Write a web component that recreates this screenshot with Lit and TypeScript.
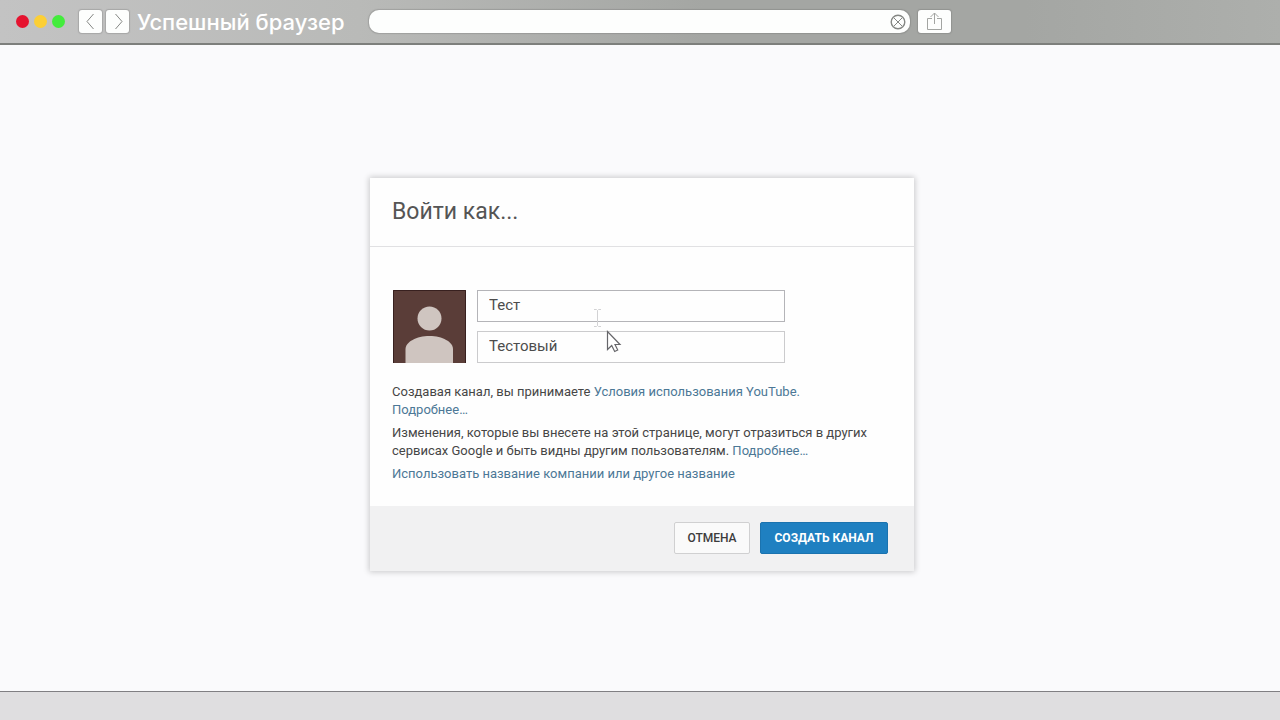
import { LitElement, html, css } from "lit";
import { customElement } from "lit/decorators.js";

@customElement("browser-bar")
class BrowserBar extends LitElement {
  static styles = css`
    :host {
      display: block;
    }
    .bar {
      box-sizing: border-box;
      height: 45px;
      display: flex;
      align-items: center;
      padding: 0 16px;
      background: linear-gradient(90deg, #c3c3c3 0%, #b9bab8 28%, #a4a6a3 55%, #a4a6a3 80%, #adafac 100%);
      border-bottom: 2px solid #7d7f7c;
    }
    .lights {
      display: flex;
      gap: 5px;
      margin-right: 14px;
    }
    .light {
      width: 13px;
      height: 13px;
      border-radius: 50%;
    }
    .red {
      background: #e5132f;
    }
    .yellow {
      background: #fccf35;
    }
    .green {
      background: #43ec3c;
    }
    button {
      display: grid;
      place-items: center;
      padding: 0;
      border: 0;
      background: #fdfefd;
      border-radius: 3px;
      height: 23px;
      box-shadow: 0 0 1px 1px rgba(90, 90, 90, 0.25);
    }
    .nav {
      display: flex;
      gap: 4px;
      margin-right: 8px;
    }
    .nav button {
      width: 23px;
    }
    .name {
      font: 500 22px/26px Inter, "Liberation Sans", sans-serif;
      color: #fff;
      width: 212px;
      white-space: nowrap;
      margin-right: 20px;
    }
    .address {
      box-sizing: border-box;
      width: 541px;
      height: 23px;
      display: flex;
      align-items: center;
      padding: 0 4px 0 12px;
      border-radius: 10px;
      background: #fdfefd;
      box-shadow: 0 0 1px 1px rgba(90, 90, 90, 0.25);
      margin-right: 8px;
    }
    .address input {
      flex: 1;
      min-width: 0;
      border: 0;
      outline: 0;
      background: none;
      font: 14px/20px Roboto, sans-serif;
    }
    .address button {
      width: 16px;
      height: 16px;
      background: none;
      box-shadow: none;
    }
    .share {
      width: 33px;
    }
    svg {
      display: block;
      fill: none;
      stroke: #858784;
    }
  `;

  render() {
    return html`
      <header class="bar">
        <div class="lights">
          <span class="light red"></span>
          <span class="light yellow"></span>
          <span class="light green"></span>
        </div>
        <nav class="nav">
          <button aria-label="Назад">
            <svg width="22" height="23" viewBox="0 0 22 23"><path d="M13.500 4 7 11.500l6.500 7.500" /></svg>
          </button>
          <button aria-label="Вперёд">
            <svg width="22" height="23" viewBox="0 0 22 23"><path d="m8.500 4 6.500 7.500-6.500 7.500" /></svg>
          </button>
        </nav>
        <span class="name">Успешный браузер</span>
        <div class="address">
          <input type="text" aria-label="Адрес" />
          <button aria-label="Очистить">
            <svg width="16" height="16" viewBox="0 0 16 16">
              <circle cx="8" cy="8" r="6.800" stroke-width="1.400" />
              <path d="m4 4 8 8M12 4l-8 8" />
            </svg>
          </button>
        </div>
        <button class="share" aria-label="Поделиться">
          <svg width="33" height="23" viewBox="0 0 33 23">
            <path d="M14 8.500H9.500v11h14v-11H19M16.500 14V3M12.500 7l4-4 4 4" stroke="#a3a5a2" />
          </svg>
        </button>
      </header>
    `;
  }
}

@customElement("channel-dialog")
class ChannelDialog extends LitElement {
  static styles = css`
    :host {
      display: block;
      width: 544px;
      max-width: 100%;
      font: 13px/18px Roboto, sans-serif;
      color: #464646;
    }
    .dialog {
      background: #fefefe;
      box-shadow: 0 0 6px 1px rgba(0, 0, 0, 0.2);
    }
    h1 {
      margin: 0;
      padding: 20px 22px;
      font-size: 23px;
      line-height: 28px;
      font-weight: 400;
      color: #555;
      border-bottom: 1px solid #e1e1e3;
    }
    .body {
      padding: 43px 22px 23px;
    }
    .account {
      display: flex;
      gap: 11px;
      margin: 0 1px 20px;
    }
    .avatar {
      display: block;
      width: 73px;
      height: 73px;
    }
    .fields {
      display: flex;
      flex-direction: column;
      justify-content: space-between;
      width: 308px;
    }
    .fields input {
      box-sizing: border-box;
      width: 100%;
      height: 32px;
      padding: 0 11px 2px;
      border: 1px solid #cbcbcd;
      border-radius: 0;
      background: #fefefe;
      font: 15px/18px Roboto, sans-serif;
      color: #4c4c4c;
      outline: 0;
    }
    .fields .first {
      border-color: #b4b4b8;
    }
    p {
      margin: 0 0 5px;
    }
    p:last-child {
      margin: 0;
    }
    a {
      color: #4c7896;
      text-decoration: none;
    }
    .actions {
      display: flex;
      justify-content: flex-end;
      gap: 10px;
      padding: 16px 26px 17px;
      background: #f1f1f2;
    }
    .actions button {
      box-sizing: border-box;
      height: 32px;
      padding: 0;
      border: 1px solid #d0d0d1;
      border-radius: 2px;
      background: #fafafa;
      font: 500 12px/18px Roboto, sans-serif;
      color: #3c3c3c;
      width: 76px;
    }
    .actions .primary {
      width: 128px;
      border-color: #1b73af;
      background: #1f80c1;
      color: #fff;
      font-weight: 700;
    }
  `;

  render() {
    return html`
      <form class="dialog" @submit=${(e: Event) => e.preventDefault()}>
        <h1>Войти как...</h1>
        <div class="body">
          <div class="account">
            <svg class="avatar" viewBox="0 0 73 73" aria-hidden="true">
              <rect width="73" height="73" fill="#5a3d38" />
              <path d="M.500 73V.500h72V73" fill="none" stroke="#38201f" />
              <circle cx="36.500" cy="28.500" r="12" fill="#cfc5c0" />
              <path d="M12.500 73V59c0-7 11-13 24-13s23.500 6 23.500 13v14z" fill="#cfc5c0" />
            </svg>
            <div class="fields">
              <input class="first" type="text" aria-label="Имя" value="Тест" />
              <input type="text" aria-label="Фамилия" value="Тестовый" />
            </div>
          </div>
          <p>
            Создавая канал, вы принимаете <a href="#">Условия использования YouTube.</a><br />
            <a href="#">Подробнее…</a>
          </p>
          <p>
            <span>Изменения, которые вы внесете на этой странице, могут отразиться в других</span><br />
            <span>сервисах Google и быть видны другим пользователям.</span>
            <a href="#">Подробнее…</a>
          </p>
          <p><a href="#">Использовать название компании или другое название</a></p>
        </div>
        <div class="actions">
          <button type="button">ОТМЕНА</button>
          <button type="submit" class="primary">СОЗДАТЬ КАНАЛ</button>
        </div>
      </form>
    `;
  }
}

@customElement("app-root")
class AppRoot extends LitElement {
  static styles = css`
    :host {
      display: flex;
      flex-direction: column;
      min-height: 100vh;
      background: #fafafc;
    }
    main {
      flex: 1;
      display: flex;
      justify-content: center;
      align-items: flex-start;
      padding: 133px 0 40px 4px;
    }
    .stage {
      position: relative;
    }
    .caret,
    .pointer {
      position: absolute;
      pointer-events: none;
    }
    .caret {
      left: 223px;
      top: 130px;
    }
    .pointer {
      left: 236px;
      top: 152px;
    }
    footer {
      height: 28px;
      border-top: 1px solid #807f83;
      background: #dfdee0;
    }
  `;

  render() {
    return html`
      <browser-bar></browser-bar>
      <main>
        <div class="stage">
          <channel-dialog></channel-dialog>
          <svg class="caret" width="9" height="20" viewBox="0 0 9 20" fill="none" stroke="#d2d2d4">
            <path d="M1 1.500h2.500l1 1 1-1H8M4.500 2.500v15M1 18.500h2.500l1-1 1 1H8" />
          </svg>
          <svg class="pointer" width="16" height="24" viewBox="0 0 16 24">
            <path
              d="M1.500 1.500v18l4.200-4 3 6 3-1.500-2.700-5.500h5z"
              fill="#fff"
              stroke="#66666a"
              stroke-width="1.200"
            />
          </svg>
        </div>
      </main>
      <footer></footer>
    `;
  }
}
